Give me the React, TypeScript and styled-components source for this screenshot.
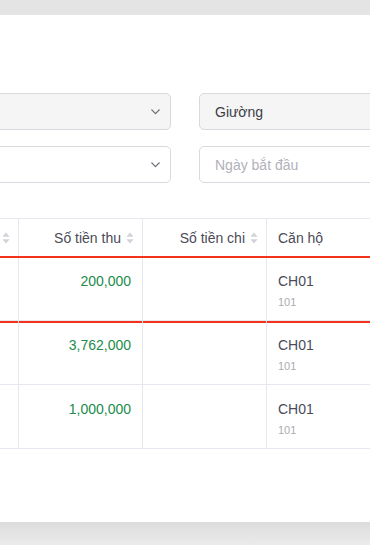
import React from 'react';
import styled, { createGlobalStyle } from 'styled-components';

const Global = createGlobalStyle`
  html, body { margin: 0; padding: 0; background: #fff; }
  body { font-family: "Liberation Sans", Arial, sans-serif; overflow: hidden; }
  * { box-sizing: border-box; }
`;

const Page = styled.div`
  display: flex;
  flex-direction: column;
  width: 370px;
  height: 545px;
  overflow: hidden;
`;

const TopBar = styled.div`
  flex: none;
  height: 15px;
  background: #e4e4e4;
`;

const Main = styled.main`
  flex: 1;
  display: flex;
  flex-direction: column;
  padding-top: 78px;
  background: #fff;
  overflow: hidden;
`;

const BottomBar = styled.div`
  flex: none;
  height: 23px;
  background: linear-gradient(#dcdcdc, #ebebeb);
`;

const Filters = styled.div`
  display: grid;
  grid-template-columns: 371px 371px;
  column-gap: 28px;
  row-gap: 16px;
  width: 770px;
  margin-left: -200px;
`;

const Field = styled.div<{ $filled?: boolean; $placeholder?: boolean }>`
  display: flex;
  align-items: center;
  justify-content: space-between;
  height: 37px;
  padding: 0 10px 0 15px;
  border: 1px solid #d8d8de;
  border-radius: 5px;
  background: ${(p) => (p.$filled ? '#f5f5f6' : '#fff')};
  color: ${(p) => (p.$placeholder ? '#b1b1b9' : '#3c3c46')};
  font-size: 14px;
`;

const Chevron = () => (
  <svg width="9" height="6" viewBox="0 0 9 6" fill="none">
    <path d="M0.8 0.9 L4.5 4.6 L8.2 0.9" stroke="#6b6b75" strokeWidth="1.3" strokeLinecap="round" strokeLinejoin="round" />
  </svg>
);

const Table = styled.div`
  display: flex;
  flex-direction: column;
  width: 567px;
  margin-top: 35px;
  margin-left: -100px;
`;

const columns = '119px 124px 124px 200px';

const HeadRow = styled.div`
  display: grid;
  grid-template-columns: ${columns};
  height: 39px;
  border-top: 1px solid #e7e7ef;
`;

const HeadCell = styled.div<{ $align?: 'left' | 'right' }>`
  display: flex;
  align-items: center;
  justify-content: ${(p) => (p.$align === 'left' ? 'flex-start' : 'flex-end')};
  gap: 5px;
  padding: 0 8px 0 11px;
  border-right: 1px solid #e7e7ef;
  color: #4b4b57;
  font-size: 14px;
  white-space: nowrap;
`;

const BodyRow = styled.div<{ $selected?: boolean }>`
  position: relative;
  display: grid;
  grid-template-columns: ${columns};
  height: 64px;
  border-bottom: 1px solid #e7e7ef;

  ${(p) =>
    p.$selected &&
    `
    &::after {
      content: '';
      position: absolute;
      left: 0;
      right: 0;
      top: -1px;
      height: 63px;
      border-top: 2px solid #f2321a;
      border-bottom: 2px solid #f2321a;
      pointer-events: none;
    }
  `}
`;

const BodyCell = styled.div<{ $align?: 'left' | 'right' }>`
  padding: 14px 11px 0 11px;
  border-right: 1px solid #e7e7ef;
  text-align: ${(p) => (p.$align === 'right' ? 'right' : 'left')};
  font-size: 14px;
  line-height: 20px;
  color: #4b4b57;
`;

const Amount = styled.span`
  color: #228b4c;
`;

const Sub = styled.div`
  margin-top: 2px;
  font-size: 11px;
  line-height: 18px;
  color: #ababb1;
`;

const Sorter = () => (
  <svg width="8" height="12" viewBox="0 0 8 12">
    <path d="M4 0.5 L7.6 4.8 L0.4 4.8 Z" fill="#d2d2d9" />
    <path d="M0.4 7.2 L7.6 7.2 L4 11.5 Z" fill="#d2d2d9" />
  </svg>
);

const rows = [
  { amount: '200,000', apt: 'CH01', room: '101', selected: true },
  { amount: '3,762,000', apt: 'CH01', room: '101' },
  { amount: '1,000,000', apt: 'CH01', room: '101' },
];

export default function App() {
  return (
    <>
      <Global />
      <Page>
        <TopBar />
        <Main>
          <Filters>
            <Field $filled>
              <span />
              <Chevron />
            </Field>
            <Field $filled>Giường</Field>
            <Field>
              <span />
              <Chevron />
            </Field>
            <Field $placeholder>Ngày bắt đầu</Field>
          </Filters>
          <Table>
            <HeadRow>
              <HeadCell>
                <Sorter />
              </HeadCell>
              <HeadCell>
                Số tiền thu
                <Sorter />
              </HeadCell>
              <HeadCell>
                Số tiền chi
                <Sorter />
              </HeadCell>
              <HeadCell $align="left">Căn hộ</HeadCell>
            </HeadRow>
            {rows.map((r, i) => (
              <BodyRow key={i} $selected={r.selected}>
                <BodyCell />
                <BodyCell $align="right">
                  <Amount>{r.amount}</Amount>
                </BodyCell>
                <BodyCell />
                <BodyCell>
                  {r.apt}
                  <Sub>{r.room}</Sub>
                </BodyCell>
              </BodyRow>
            ))}
          </Table>
        </Main>
        <BottomBar />
      </Page>
    </>
  );
}
